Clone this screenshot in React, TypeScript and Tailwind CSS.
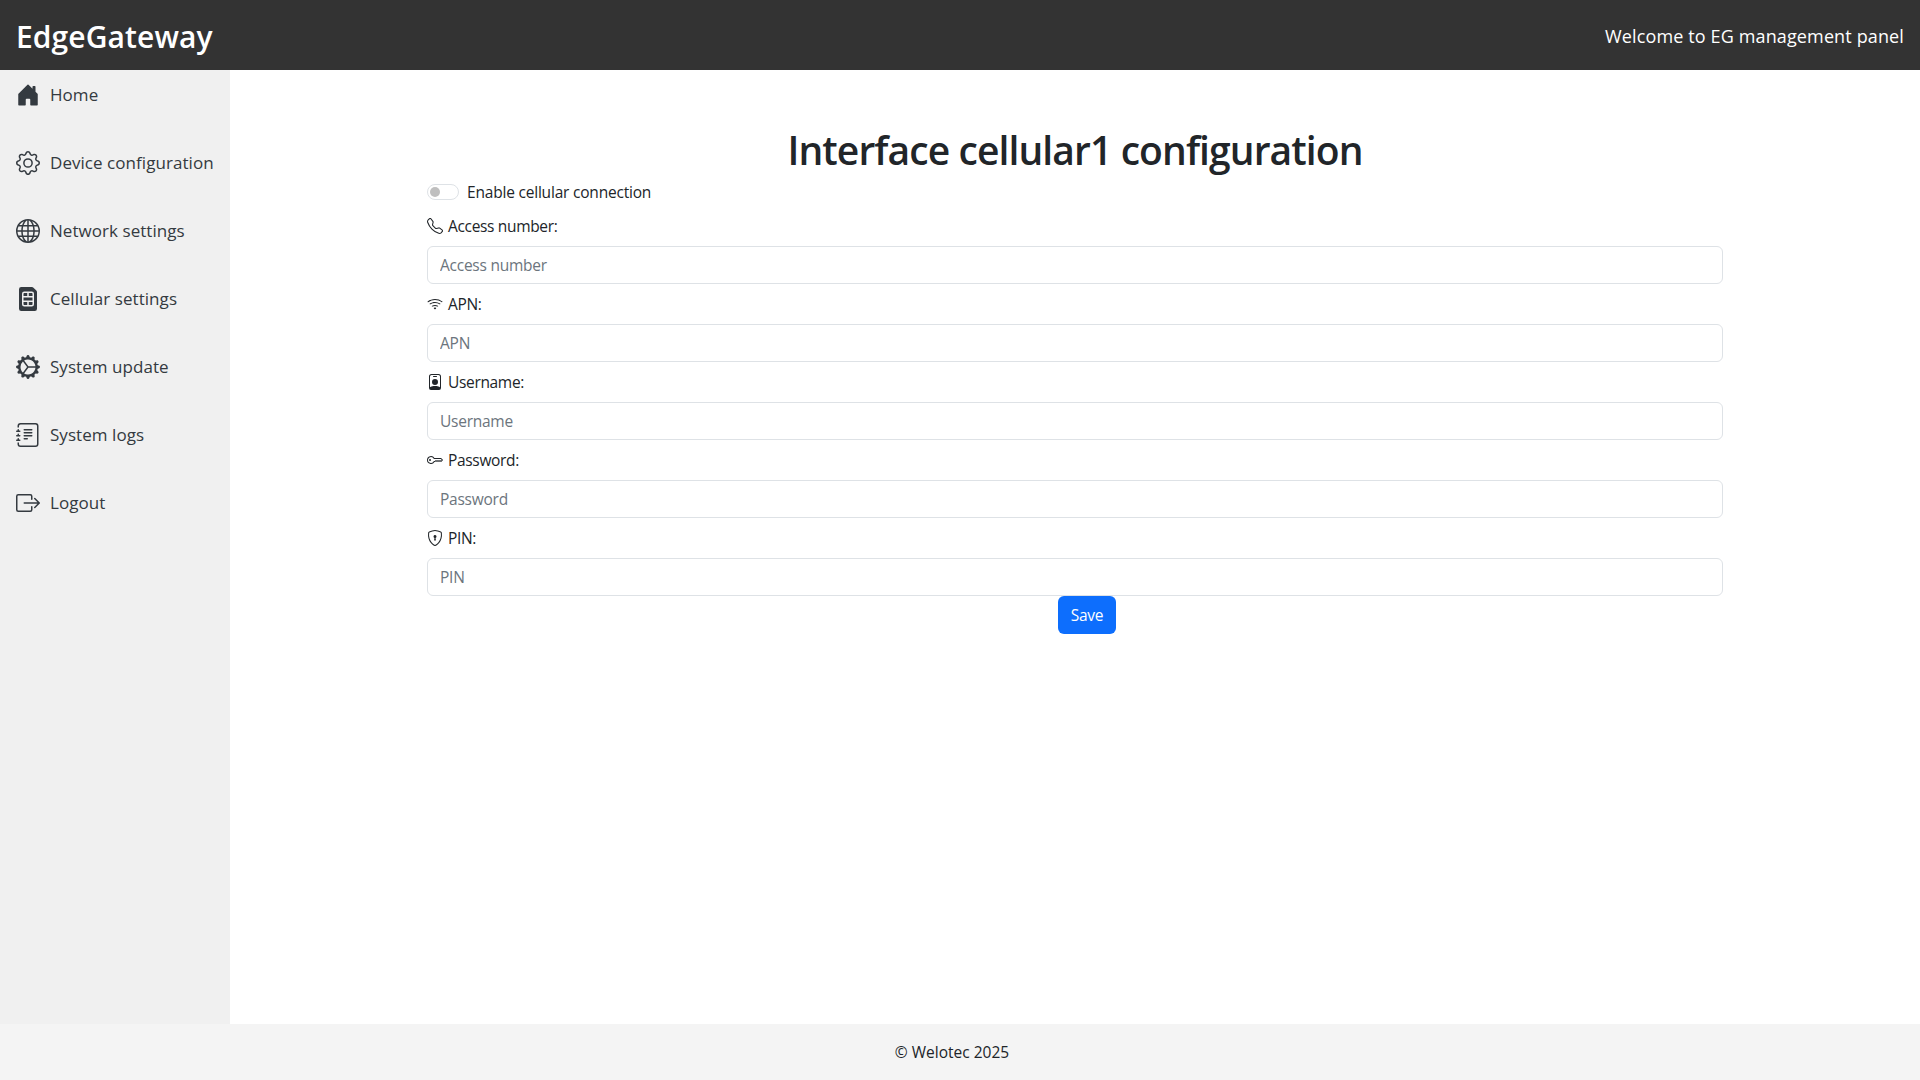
import {
  BsBoxArrowRight,
  BsGear,
  BsGearWideConnected,
  BsGlobe,
  BsHouseDoorFill,
  BsJournalText,
  BsKey,
  BsPersonBadge,
  BsShieldLock,
  BsSimFill,
  BsTelephone,
  BsWifi,
} from "react-icons/bs";

const navItems = [
  { label: "Home", icon: BsHouseDoorFill },
  { label: "Device configuration", icon: BsGear },
  { label: "Network settings", icon: BsGlobe },
  { label: "Cellular settings", icon: BsSimFill },
  { label: "System update", icon: BsGearWideConnected },
  { label: "System logs", icon: BsJournalText },
  { label: "Logout", icon: BsBoxArrowRight },
];

const fields = [
  { label: "Access number:", placeholder: "Access number", icon: BsTelephone },
  { label: "APN:", placeholder: "APN", icon: BsWifi },
  { label: "Username:", placeholder: "Username", icon: BsPersonBadge },
  { label: "Password:", placeholder: "Password", icon: BsKey },
  { label: "PIN:", placeholder: "PIN", icon: BsShieldLock },
];

export default function App() {
  return (
    <div className="flex h-[1080px] flex-col bg-white font-['Open_Sans','Liberation_Sans',sans-serif] text-[#212529]">
      {/* header */}
      <header className="flex h-[70px] items-center justify-between bg-[#333333] px-4 text-white">
        <span className="pt-[2px] text-[30px] font-semibold tracking-[0.1px]">EdgeGateway</span>
        <span className="pt-[2px] text-lg tracking-[0.13px]">Welcome to EG management panel</span>
      </header>

      <div className="flex flex-1">
        {/* sidebar */}
        <nav className="w-[230px] bg-[#f0f0f0]">
          {navItems.map((item) => (
            <a key={item.label} className="flex h-[68px] items-center gap-[10px] pb-[18px] pl-4 text-[#343a40]">
              <item.icon className="h-6 w-6 shrink-0" />
              <span className="text-[17px] tracking-[0.05px] whitespace-nowrap">{item.label}</span>
            </a>
          ))}
        </nav>

        {/* main content */}
        <main className="flex-1 pt-[56px]">
          <div className="mx-auto w-[1320px] px-3">
            <h1 className="mb-2 text-center text-[39px] leading-[48px] font-semibold tracking-[-0.9px]">
              Interface cellular1 configuration
            </h1>

            <form>
              <div className="-mt-px mb-[9px] flex h-6 items-center gap-2">
                <span className="mb-[2px] flex h-4 w-8 items-center rounded-full border border-[#dee2e6] bg-white pl-[2px]">
                  <span className="h-2.5 w-2.5 rounded-full bg-[#bfbfbf]" />
                </span>
                <span className="text-[15.5px] tracking-[-0.2px]">Enable cellular connection</span>
              </div>

              <div className="flex flex-col gap-2">
                {fields.map((field) => (
                  <div key={field.label}>
                    <label className="mb-2 flex h-6 items-center gap-[5px] text-[15.5px] tracking-[-0.33px]">
                      <field.icon className="h-4 w-4 shrink-0" />
                      <span className="pt-[2px]">{field.label}</span>
                    </label>
                    <input
                      placeholder={field.placeholder}
                      className="block h-[38px] w-full rounded-md border border-[#dee2e6] px-3 text-[15.5px] tracking-[-0.25px] placeholder:text-[#6c757d]"
                    />
                  </div>
                ))}
              </div>

              <div className="flex justify-center pl-6">
                <button type="button" className="h-[38px] w-[58px] rounded-md bg-[#0d6efd] pt-[2px] text-[15.5px] tracking-[-0.3px] text-white">
                  Save
                </button>
              </div>
            </form>
          </div>
        </main>
      </div>

      {/* footer */}
      <footer className="flex h-14 items-center justify-center bg-[#f4f4f4] pt-[2px] pr-4 text-[15.5px] tracking-[0px]">
        © Welotec 2025
      </footer>
    </div>
  );
}
